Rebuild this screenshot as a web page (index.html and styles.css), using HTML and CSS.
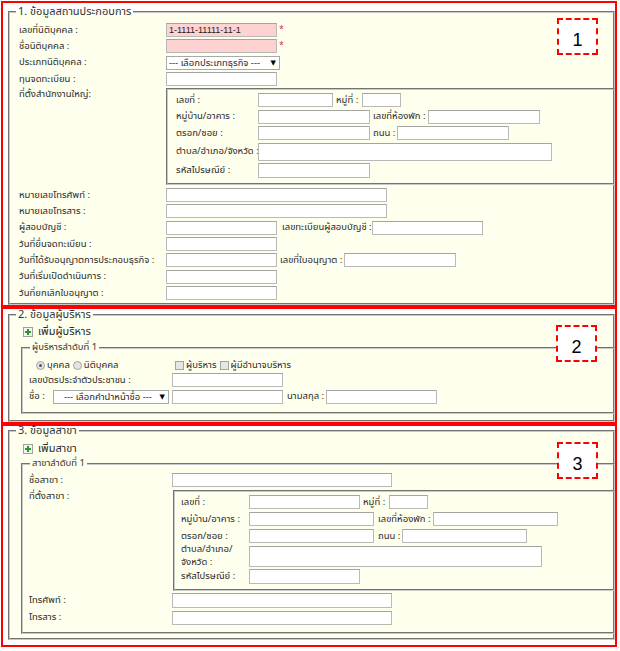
FILE: index.html
```html
<!DOCTYPE html>
<html lang="th">
<head>
<meta charset="utf-8">
<title>ข้อมูลสถานประกอบการ</title>
<link rel="stylesheet" href="styles.css">
</head>
<body>
<section class="sec s1">
  <div class="mark m1">1</div>
  <fieldset class="fs fs1">
    <legend>1. ข้อมูลสถานประกอบการ</legend>
    <div class="row"><span class="lbl">เลขที่นิติบุคคล :</span><input class="in w111 pink" value="1-1111-11111-11-1"><span class="req">*</span></div>
    <div class="row"><span class="lbl">ชื่อนิติบุคคล :</span><input class="in w111 pink" value=""><span class="req">*</span></div>
    <div class="row"><span class="lbl">ประเภทนิติบุคคล :</span><div class="sel w114"><span>--- เลือกประเภทธุรกิจ ---</span><span class="arr">▼</span></div></div>
    <div class="row"><span class="lbl">ทุนจดทะเบียน :</span><input class="in w111"></div>
    <div class="row top"><span class="lbl">ที่ตั้งสำนักงานใหญ่:</span>
      <div class="addr a1">
        <div class="arow"><span class="albl">เลขที่ :</span><input class="in w75"><span class="il w26">หมู่ที่ :</span><input class="in w39"></div>
        <div class="arow"><span class="albl">หมู่บ้าน/อาคาร :</span><input class="in w112"><span class="il w55">เลขที่ห้องพัก :</span><input class="in w112"></div>
        <div class="arow"><span class="albl">ตรอก/ซอย :</span><input class="in w112"><span class="il w24">ถนน :</span><input class="in w112"></div>
        <div class="arow r20"><span class="albl">ตำบล/อำเภอ/จังหวัด :</span><textarea class="in ta w294 h18"></textarea></div>
        <div class="arow r17"><span class="albl">รหัสไปรษณีย์ :</span><input class="in w112 h15"></div>
      </div>
    </div>
    <div class="row mt"><span class="lbl">หมายเลขโทรศัพท์ :</span><input class="in w221"></div>
    <div class="row"><span class="lbl">หมายเลขโทรสาร :</span><input class="in w221"></div>
    <div class="row"><span class="lbl">ผู้สอบบัญชี :</span><input class="in w111"><span class="il w90 ml5">เลขทะเบียนผู้สอบบัญชี :</span><input class="in w111"></div>
    <div class="row"><span class="lbl">วันที่ยื่นจดทะเบียน :</span><input class="in w111"></div>
    <div class="row"><span class="lbl">วันที่ได้รับอนุญาตการประกอบธุรกิจ :</span><input class="in w111"><span class="il w64">เลขที่ใบอนุญาต :</span><input class="in w112"></div>
    <div class="row"><span class="lbl">วันที่เริ่มเปิดดำเนินการ :</span><input class="in w111"></div>
    <div class="row"><span class="lbl">วันที่ยกเลิกใบอนุญาต :</span><input class="in w111"></div>
  </fieldset>
</section>

<section class="sec s2">
  <div class="mark m2">2</div>
  <fieldset class="fs fs2">
    <legend>2. ข้อมูลผู้บริหาร</legend>
    <div class="add"><svg class="plus" width="10" height="10" viewBox="0 0 10 10"><rect x="0.5" y="0.5" width="9" height="9" fill="#f3f6ee" stroke="#a0a0a0"/><path d="M5 2v6M2 5h6" stroke="#279a27" stroke-width="2"/></svg><span>เพิ่มผู้บริหาร</span></div>
    <fieldset class="sub sub2">
      <legend>ผู้บริหารลำดับที่ 1</legend>
      <div class="srow r14">
        <div class="radios"><span class="radio on"></span><span class="opt">บุคคล</span><span class="radio"></span><span class="opt">นิติบุคคล</span></div>
        <div class="checks"><span class="chk"></span><span class="opt">ผู้บริหาร</span><span class="chk"></span><span class="opt">ผู้มีอำนาจบริหาร</span></div>
      </div>
      <div class="srow r165"><span class="slbl">เลขบัตรประจำตัวประชาชน :</span><input class="in w111"></div>
      <div class="srow r165"><span class="nlbl">ชื่อ :</span><div class="sel w116 ctr"><span>--- เลือกคำนำหน้าชื่อ ---</span><span class="arr">▼</span></div><input class="in w111 ml3"><span class="il w39 ml4">นามสกุล :</span><input class="in w111"></div>
    </fieldset>
  </fieldset>
</section>

<section class="sec s3">
  <div class="mark m3">3</div>
  <fieldset class="fs fs3">
    <legend>3. ข้อมูลสาขา</legend>
    <div class="add"><svg class="plus" width="10" height="10" viewBox="0 0 10 10"><rect x="0.5" y="0.5" width="9" height="9" fill="#f3f6ee" stroke="#a0a0a0"/><path d="M5 2v6M2 5h6" stroke="#279a27" stroke-width="2"/></svg><span>เพิ่มสาขา</span></div>
    <fieldset class="sub sub3">
      <legend>สาขาลำดับที่ 1</legend>
      <div class="srow r16"><span class="slbl">ชื่อสาขา :</span><input class="in w220"></div>
      <div class="srow top"><span class="slbl lt">ที่ตั้งสาขา :</span>
        <div class="addr a3">
          <div class="arow r17"><span class="albl">เลขที่ :</span><input class="in w111"><span class="il w26">หมู่ที่ :</span><input class="in w39"></div>
          <div class="arow r17"><span class="albl">หมู่บ้าน/อาคาร :</span><input class="in w125"><span class="il w55 ml4">เลขที่ห้องพัก :</span><input class="in w125"></div>
          <div class="arow r17"><span class="albl">ตรอก/ซอย :</span><input class="in w125"><span class="il w24 ml4">ถนน :</span><input class="in w125"></div>
          <div class="arow r23"><span class="albl two">ตำบล/อำเภอ/<br>จังหวัด :</span><textarea class="in ta w293 h21"></textarea></div>
          <div class="arow r17"><span class="albl">รหัสไปรษณีย์ :</span><input class="in w111 h15"></div>
        </div>
      </div>
      <div class="srow r17 mt1"><span class="slbl">โทรศัพท์ :</span><input class="in w220 h15"></div>
      <div class="srow r17"><span class="slbl">โทรสาร :</span><input class="in w220"></div>
    </fieldset>
  </fieldset>
</section>
</body>
</html>
```

FILE: styles.css
```css
* { box-sizing: border-box; }

body {
  margin: 0;
  padding: 1px 0 0 1px;
  background: #fff;
  color: #2a2a2a;
  font-family: Tahoma, "Noto Sans Thai", "Noto Sans", "DejaVu Sans", sans-serif;
  font-size: 9.5px;
  line-height: 13px;
}

.sec {
  position: relative;
  width: 616px;
  border: 2px solid #ff0000;
}
.s1 { height: 306px; }
.s2 { height: 117px; }
.s3 { height: 223px; }

.mark {
  position: absolute;
  z-index: 2;
  width: 41px;
  height: 37px;
  border: 2px dashed #ff0000;
  background: #fff;
  color: #000;
  font-family: "Liberation Sans", Arial, sans-serif;
  font-size: 18px;
  line-height: 20px;
  display: flex;
  align-items: center;
  justify-content: center;
  padding-top: 6px;
}
.m1 { left: 554px; top: 15px; }
.m2 { left: 553px; top: 16px; }
.m3 { left: 554px; top: 16px; }

.fs {
  margin: 2px 0 0 5px;
  padding: 3px 0 2px 0;
  border: 2px groove #c8c8c8;
  background: #ffffee;
  min-width: 0;
}
.fs > legend {
  margin-left: 6px;
  padding: 0 2px;
  font-size: 11px;
  line-height: 14px;
  color: #333;
}
.fs2 { margin-top: -1px; padding: 2px 0 0 0; }
.fs3 { margin-top: -2px; padding: 3px 0 0 0; }

.row {
  display: flex;
  align-items: center;
  height: 16.33px;
  padding-left: 9px;
  white-space: nowrap;
}
.row.top { align-items: flex-start; height: auto; }
.row.top .lbl { line-height: 14px; }
.row.mt { margin-top: 2.5px; }
.lbl { width: 147px; flex: none; }

.in {
  flex: none;
  height: 14px;
  margin: 0;
  padding: 0 2px;
  border: 1px solid #b9b9b9;
  border-top-color: #a4a4a4;
  background: #fff;
  font-family: "Liberation Sans", Arial, sans-serif;
  font-size: 9px;
  color: #222;
  outline: none;
}
.ta { resize: none; overflow: hidden; display: block; }
.pink { background: #ffd2d2; }
.h15 { height: 15px; }
.h18 { height: 18px; }
.h21 { height: 21px; }
.w39 { width: 39px; }
.w75 { width: 75px; }
.w111 { width: 111px; }
.w112 { width: 112px; }
.w114 { width: 114px; }
.w116 { width: 116px; }
.w125 { width: 125px; }
.w220 { width: 220px; }
.w221 { width: 221px; }
.w293 { width: 293px; }
.w294 { width: 294px; }

.req {
  align-self: flex-start;
  margin: 3px 0 0 2px;
  color: #e03030;
  font-size: 9px;
  line-height: 9px;
}

.il { flex: none; margin-left: 3px; }
.il.w24 { width: 24px; }
.il.w26 { width: 26px; }
.il.w39 { width: 39px; }
.il.w55 { width: 55px; }
.il.w64 { width: 64px; }
.il.w90 { width: 90px; }
.ml3 { margin-left: 3px; }
.ml4 { margin-left: 4px; }
.ml5 { margin-left: 5px; }

.sel {
  flex: none;
  display: flex;
  align-items: center;
  justify-content: space-between;
  height: 14px;
  padding: 0 3px 0 2px;
  border: 1px solid #a9a9a9;
  background: #fff;
  line-height: 12px;
}
.sel.ctr { padding-left: 10px; }
.arr { font-size: 7px; color: #000; }

.addr {
  flex: 1;
  margin-right: -2px;
  border: 2px groove #c8c8c8;
}
.a1 { margin-top: 0.7px; padding: 2px 0 4px 8px; }
.a3 { margin: 2px -2px 0 1px; padding: 1.5px 0 4.5px 6px; }

.arow {
  display: flex;
  align-items: center;
  height: 16.5px;
  white-space: nowrap;
}
.arow.r17 { height: 17px; }
.arow.r20 { height: 20px; }
.arow.r23 { height: 23px; }
.a1 .albl { width: 82px; flex: none; }
.a3 .albl { width: 68px; flex: none; }
.albl.two { line-height: 13px; white-space: normal; }

.add {
  display: flex;
  align-items: center;
  height: 16px;
  padding-left: 13px;
  font-size: 11px;
  line-height: 14px;
}
.plus { flex: none; margin-right: 5px; }

.sub {
  margin: 1px -2px 0 11px;
  padding: 4px 0 7px 0;
  border: 2px groove #c8c8c8;
  min-width: 0;
}
.sub > legend {
  margin-left: 7px;
  padding: 0 2px;
  font-size: 9.5px;
  line-height: 13px;
  color: #333;
}
.sub2 { margin-bottom: 6px; }
.sub3 { margin-top: 0; margin-bottom: 4px; padding: 2px 0 6px 0; }

.srow {
  display: flex;
  align-items: center;
  height: 16px;
  padding-left: 6px;
  white-space: nowrap;
}
.srow.r14 { height: 14px; }
.srow.r16 { height: 16px; }
.srow.r165 { height: 16.5px; }
.srow.r17 { height: 17px; }
.srow.top { align-items: flex-start; height: auto; }
.srow.mt1 { margin-top: 1px; }
.slbl { width: 143px; flex: none; }
.slbl.lt { margin-top: 1px; line-height: 14px; }
.nlbl { width: 24px; flex: none; }

.radios { width: 146px; flex: none; display: flex; align-items: center; padding-left: 7px; }
.checks { display: flex; align-items: center; }
.radio {
  flex: none;
  position: relative;
  width: 9px;
  height: 9px;
  border-radius: 50%;
  border: 1px solid #a2a2a2;
  background: #e4e4e4;
}
.radio.on::after {
  content: "";
  position: absolute;
  left: 2px;
  top: 2px;
  width: 3px;
  height: 3px;
  border-radius: 50%;
  background: #555;
}
.chk {
  flex: none;
  width: 9px;
  height: 9px;
  border: 1px solid #a2a2a2;
  background: #e6e6e6;
}
.opt { margin: 0 3px 0 2px; }
```
